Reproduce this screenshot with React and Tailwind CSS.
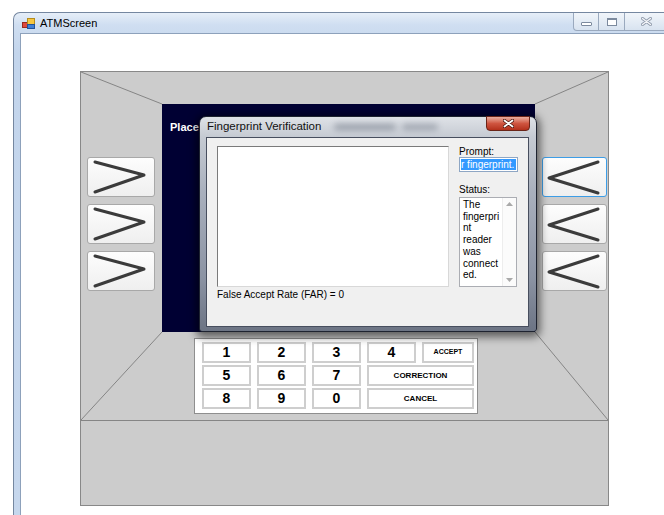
import React from 'react'

// small WinForms-style app icon in the caption
function AppIcon() {
  return (
    <svg width="13" height="11" viewBox="0 0 13 11">
      <rect x="0.5" y="4.5" width="5" height="5" fill="#e0483c" stroke="#9a2a20" />
      <rect x="5.5" y="0.5" width="7" height="6" fill="#f6c640" stroke="#b58c1c" />
      <rect x="5.5" y="6.5" width="7" height="4" fill="#3f7fd6" stroke="#20529a" />
    </svg>
  )
}

function CaptionButtons() {
  return (
    <div className="ml-auto mr-[5px] flex h-[18px] self-start">
      <div className="flex w-[26px] items-center justify-center rounded-bl-[4px] border border-t-0 border-[#9aa9be] bg-gradient-to-b from-[#f1f5fa] to-[#d8e3f0]">
        <div className="mt-[5px] h-[4px] w-[11px] rounded-[1px] border border-[#7c8a9e] bg-white" />
      </div>
      <div className="flex w-[26px] items-center justify-center border-b border-r border-[#9aa9be] bg-gradient-to-b from-[#f1f5fa] to-[#d8e3f0]">
        <div className="h-[8px] w-[10px] border border-t-2 border-[#7c8a9e] bg-white" />
      </div>
      <div className="flex w-[43px] items-center justify-center rounded-br-[4px] border-b border-r border-[#9aa9be] bg-gradient-to-b from-[#f1f5fa] to-[#d8e3f0]">
        <svg width="11" height="9" viewBox="0 0 11 9">
          <path d="M1.5 1.5 L9.5 7.5 M9.5 1.5 L1.5 7.5" stroke="#8e99aa" strokeWidth="3" strokeLinecap="round" />
          <path d="M1.5 1.5 L9.5 7.5 M9.5 1.5 L1.5 7.5" stroke="#f4f6f9" strokeWidth="1.4" strokeLinecap="round" />
        </svg>
      </div>
    </div>
  )
}

// big chevron buttons beside the screen
function SideKey({ dir, focused }) {
  const points = dir === 'right' ? '7,4 56,17 7,34' : '55,4 6,20 55,35'
  return (
    <div
      className={`h-[40px] rounded-[3px] border bg-gradient-to-b from-[#fdfdfd] to-[#efefef] ${
        focused ? 'border-[#3d9de6]' : 'border-[#a8a8a8]'
      }`}
    >
      <svg width="64" height="38" viewBox="0 0 64 38">
        <polyline points={points} fill="none" stroke="#3b3b3b" strokeWidth="3" strokeLinecap="round" strokeLinejoin="round" />
      </svg>
    </div>
  )
}

function Key({ label, wide, word, tiny }) {
  return (
    <div
      className={`flex items-center justify-center border-2 border-[#cecece] bg-white font-bold text-black ${
        wide ? 'col-span-2' : ''
      } ${word ? (tiny ? 'text-[7px]' : 'text-[8px]') : 'text-[14px]'}`}
    >
      {label}
    </div>
  )
}

function Keypad() {
  return (
    <div className="ml-[113px] mt-[6px] h-[76px] w-[284px] border border-[#8e8e8e] bg-white pl-[7px] pt-[3px]">
      <div className="grid grid-cols-[49px_49px_49px_49px_52px] auto-rows-[21px] gap-x-[6px] gap-y-[2px]">
        <Key label="1" />
        <Key label="2" />
        <Key label="3" />
        <Key label="4" />
        <Key label="ACCEPT" word tiny />
        <Key label="5" />
        <Key label="6" />
        <Key label="7" />
        <Key label="CORRECTION" word wide />
        <Key label="8" />
        <Key label="9" />
        <Key label="0" />
        <Key label="CANCEL" word wide />
      </div>
    </div>
  )
}

function FingerprintDialog() {
  return (
    <div className="absolute left-[37px] top-[12px] z-10 flex h-[216px] w-[338px] flex-col rounded-t-[7px] rounded-b-[3px] border border-[#1e2330] bg-[linear-gradient(180deg,#dfe2e7_0%,#c6cbd3_9%,#a9b0bd_35%,#8b93a3_75%,#6c7484_100%)] pb-[4px] pl-[6px] pr-[7px] shadow-[0_2px_9px_3px_rgba(0,0,0,0.55)]">
      {/* glass title strip */}
      <div className="relative flex h-[20px] items-center pl-[1px]">
        <span className="text-[11.5px] text-[#111]">Fingerprint Verification</span>
        <div className="absolute left-[128px] top-[7px] h-[6px] w-[62px] rounded-full bg-[#4f5868] opacity-45 blur-[3px]" />
        <div className="absolute left-[196px] top-[7px] h-[6px] w-[36px] rounded-full bg-[#4f5868] opacity-40 blur-[3px]" />
        <div className="absolute right-[-1px] top-[-1px] flex h-[15px] w-[44px] items-center justify-center rounded-b-[4px] border border-[#6a2418] bg-gradient-to-b from-[#e9ad9f] via-[#cf5540] to-[#b3301b]">
          <svg width="11" height="9" viewBox="0 0 11 9">
            <path d="M1.5 1.5 L9.5 7.5 M9.5 1.5 L1.5 7.5" stroke="#4a160e" strokeWidth="3.4" strokeLinecap="round" />
            <path d="M1.5 1.5 L9.5 7.5 M9.5 1.5 L1.5 7.5" stroke="#ffffff" strokeWidth="1.8" strokeLinecap="round" />
          </svg>
        </div>
      </div>

      {/* client area */}
      <div className="flex-1 border border-[#474e5e] bg-[#f0f0f0] text-[10px] leading-[12px] text-black">
        <div className="flex gap-[10px] pl-[10px] pt-[8px]">
          <div className="flex flex-col">
            <div className="h-[141px] w-[232px] border border-[#7a7a7a] border-b-[#d8d8d8] border-r-[#d8d8d8] bg-white" />
            <div className="mt-[2px]">False Accept Rate (FAR) = 0</div>
          </div>
          <div className="flex w-[59px] flex-col">
            <div className="h-[11px] leading-[11px]">Prompt:</div>
            <div className="flex h-[15px] items-center overflow-hidden border border-[#8ea6c4] bg-white pl-[1px]">
              <span className="whitespace-nowrap bg-[#3399ff] pr-[2px] leading-[11px] text-white">r fingerprint.</span>
            </div>
            <div className="mt-[12px]">Status:</div>
            <div className="mt-[1px] flex h-[90px] w-[58px] border border-[#abadb3] bg-white">
              <div className="w-[42px] break-words pl-[3px] pt-[1px] leading-[11.7px]">
                The fingerprint reader was connected.
              </div>
              <div className="flex flex-1 flex-col items-center justify-between border-l border-[#ededed] bg-[#fbfbfb] py-[4px]">
                <svg width="7" height="4" viewBox="0 0 7 4">
                  <path d="M0 4 L3.5 0 L7 4 Z" fill="#a9a9a9" />
                </svg>
                <svg width="7" height="4" viewBox="0 0 7 4">
                  <path d="M0 0 L3.5 4 L7 0 Z" fill="#a9a9a9" />
                </svg>
              </div>
            </div>
          </div>
        </div>
      </div>
    </div>
  )
}

function AtmBody() {
  return (
    <div className="relative ml-[59px] mt-[37px] h-[435px] w-[529px] border border-[#888888] bg-[#cccccc]">
      {/* bevel lines of the cabinet */}
      <svg className="pointer-events-none absolute inset-0" width="527" height="433" viewBox="0 0 527 433">
        <g stroke="#858585" strokeWidth="1" fill="none">
          <line x1="0" y1="0" x2="81" y2="32" />
          <line x1="527" y1="0" x2="454" y2="32" />
          <line x1="81" y1="260" x2="0" y2="348" />
          <line x1="454" y1="260" x2="527" y2="348" />
          <line x1="0" y1="348.5" x2="527" y2="348.5" />
        </g>
      </svg>

      <div className="relative pt-[32px]">
        <div className="flex h-[228px]">
          <div className="flex w-[81px] flex-col gap-[7px] pl-[6px] pr-[7px] pt-[53px]">
            <SideKey dir="right" />
            <SideKey dir="right" />
            <SideKey dir="right" />
          </div>
          <div className="relative w-[373px] bg-[#000033]">
            <div className="pl-[8px] pt-[17px] text-[11px] font-bold leading-[12px] text-white">Place</div>
            <FingerprintDialog />
          </div>
          <div className="flex w-[73px] flex-col gap-[7px] pl-[7px] pr-[1px] pt-[53px]">
            <SideKey dir="left" focused />
            <SideKey dir="left" />
            <SideKey dir="left" />
          </div>
        </div>
        <Keypad />
      </div>
    </div>
  )
}

export default function App() {
  return (
    <div className="h-[515px] w-[664px] overflow-hidden bg-white pl-[13px] pt-[12px] font-['Liberation_Sans',Arial,sans-serif]">
      <div className="flex h-[510px] w-[660px] flex-col rounded-tl-[7px] border-l border-t border-[#7587a0] bg-[linear-gradient(180deg,#e6eef8_0px,#cfdef1_12px,#c3d5ec_40px,#c6d7ed_100%)]">
        {/* caption */}
        <div className="flex h-[20px] items-center pl-[8px]">
          <AppIcon />
          <span className="ml-[5px] text-[11px] text-black">ATMScreen</span>
          <CaptionButtons />
        </div>
        {/* client */}
        <div className="ml-[6px] flex-1 border-l border-t border-[#8da1bb] bg-white">
          <AtmBody />
        </div>
      </div>
    </div>
  )
}
